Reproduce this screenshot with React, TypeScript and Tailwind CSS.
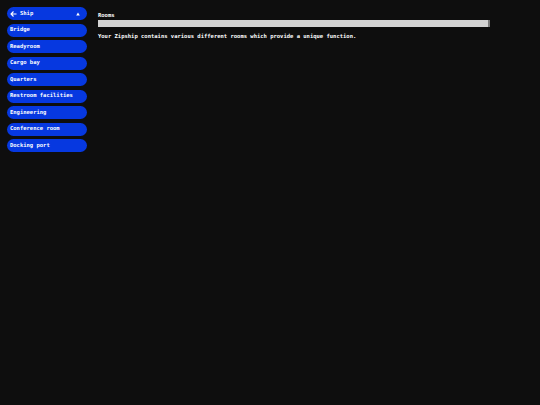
import React from "react";

const rooms = [
  "Bridge",
  "Readyroom",
  "Cargo bay",
  "Quarters",
  "Restroom facilities",
  "Engineering",
  "Conference room",
  "Docking port",
];

export default function App() {
  return (
    <div
      className="min-h-[405px] w-full bg-[#0e0e0e] text-white flex font-bold text-[5.5px] leading-none"
      style={{ fontFamily: '"DejaVu Sans Mono", "Liberation Mono", monospace' }}
    >
      {/* Sidebar */}
      <div className="w-[98px] shrink-0 pt-[7px] pl-[7px] pr-[11px] flex flex-col gap-[3.5px]">
        <button className="h-[13px] w-[80px] rounded-full bg-[#0638e0] flex items-center px-[3px] text-left">
          <svg width="7" height="6" viewBox="0 0 7 6" className="mr-[3px]">
            <path d="M6.5 3H1M3.5 0.5L1 3l2.5 2.5" stroke="white" strokeWidth="1.1" fill="none" />
          </svg>
          <span>Ship</span>
          <svg width="4" height="4" viewBox="0 0 4 4" className="ml-auto mr-[4px]">
            <path d="M2 0.5L3.8 3.5H0.2z" fill="white" />
          </svg>
        </button>
        {rooms.map((room) => (
          <button
            key={room}
            className="h-[13px] w-[80px] rounded-full bg-[#0638e0] flex items-center px-[3px] text-left"
          >
            {room}
          </button>
        ))}
      </div>

      {/* Content */}
      <div className="pt-[13px] flex flex-col">
        <div className="mb-[1px]">Rooms</div>
        <div className="w-[392px] h-[7px] bg-[#d3d3d3] border-r-2 border-[#7a7a7a]" />
        <div className="mt-[7px]">
          Your Zipship contains various different rooms which provide a unique function.
        </div>
      </div>
    </div>
  );
}
